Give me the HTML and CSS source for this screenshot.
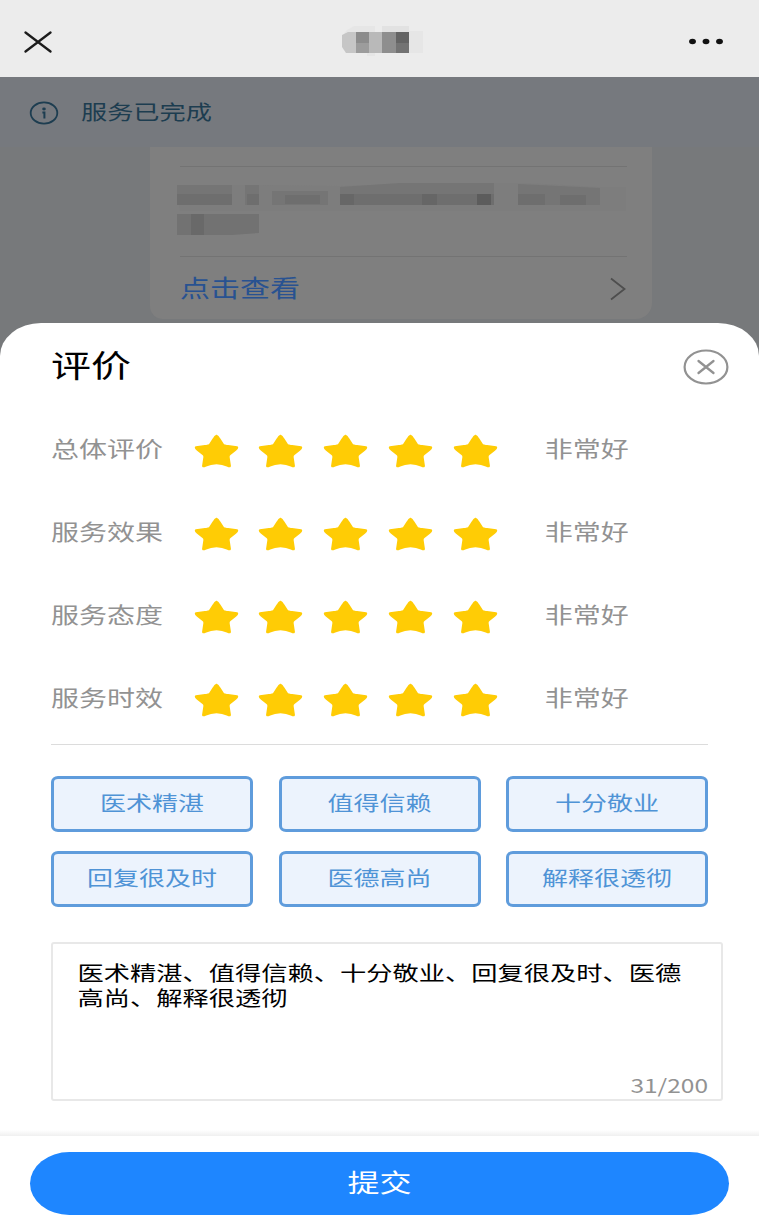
FILE: index.html
```
<!DOCTYPE html>
<html lang="zh-CN">
<head>
  <meta charset="UTF-8" />
  <title>评价</title>
  <link rel="stylesheet" href="styles.css">
</head>
<body>
  <!-- shared star shape -->
  <svg class="defs">
    <symbol id="star" viewBox="0 0 134 98" preserveAspectRatio="none">
      <path d="M67 5Q71 6 76 15L87 31Q90 33 96 34L128 38Q130 41 124 45L107 58Q103 61 103 66L107 92Q106 94 101 92Q67 76 33 92Q28 94 27 92L31 66Q31 61 27 58L10 45Q4 41 6 38L38 34Q44 33 47 31L58 15Q63 6 67 5Z" fill="#ffcc05" stroke="#ffcc05" stroke-width="6" stroke-linejoin="round"/>
    </symbol>
  </svg>

  <header class="topbar">
    <svg class="back" viewBox="0 0 28 22"><path d="M1.5 1.5L26.5 20.5M26.5 1.5L1.5 20.5" fill="none" stroke="#1c1c1c" stroke-width="2.3" stroke-linecap="round"/></svg>
    <svg class="hiddenTitle" viewBox="0 0 86 36">
      <path d="M7 10L14 6H35V37H27V33H10L4 27V13Z" fill="#e3e3e3" opacity=".6"/>
      <path d="M2 15L8 12H16V33H6L2 27Z" fill="#c6c6c6"/>
      <rect x="16" y="12" width="13" height="11" fill="#8c8c8c"/>
      <rect x="16" y="23" width="13" height="10" fill="#9c9c9c"/>
      <rect x="29" y="12" width="13" height="21" fill="#b9b9b9"/>
      <rect x="42" y="12" width="14" height="21" fill="#8e8e8e"/>
      <rect x="56" y="12" width="13" height="11" fill="#646464"/>
      <rect x="56" y="23" width="13" height="10" fill="#737373"/>
      <rect x="42" y="6" width="27" height="6" fill="#e2e2e2"/>
      <rect x="69" y="11" width="14" height="22" fill="#e6e6e6"/>
    </svg>
    <svg class="more" viewBox="0 0 36 8"><g fill="#111"><ellipse cx="4.5" cy="3.5" rx="3.4" ry="2.7"/><ellipse cx="18" cy="3.5" rx="3.4" ry="2.7"/><ellipse cx="31.5" cy="3.5" rx="3.4" ry="2.7"/></g></svg>
  </header>

  <div class="notice">
    <svg class="info" viewBox="0 0 30 24"><ellipse cx="15" cy="12" rx="13.3" ry="10.6" fill="none" stroke="#1d3d50" stroke-width="1.8"/><ellipse cx="15" cy="8" rx="1.8" ry="1.4" fill="#1d3d50"/><path d="M13.4 11.4H15.4V17.6" fill="none" stroke="#1d3d50" stroke-width="2"/></svg>
    <span class="wide">服务已完成</span>
  </div>

  <div class="page">
    <div class="card">
      <div class="message">
        <svg viewBox="0 0 446 90">
          <path d="M-3 19L80 18L160 19L260 16L345 16L420 20L446 20V44H0Z" fill="#7d7d7d"/>
          <g fill="#757575">
            <rect x="-3" y="18" width="55" height="12"/>
            <rect x="65" y="18" width="14" height="20"/>
            <rect x="92" y="24" width="56" height="14"/>
            <path d="M160 20L220 16H314V38H160Z"/>
            <path d="M338 17L420 21V38H338Z"/>
          </g>
          <g fill="#6e6e6e">
            <rect x="-3" y="27" width="55" height="11"/>
            <rect x="67" y="27" width="12" height="11"/>
            <rect x="105" y="28" width="35" height="9"/>
            <rect x="160" y="27" width="154" height="11"/>
            <rect x="338" y="27" width="27" height="11"/>
            <rect x="380" y="28" width="26" height="10"/>
          </g>
          <rect x="160" y="27" width="14" height="11" fill="#676767"/>
          <rect x="242" y="27" width="15" height="11" fill="#666"/>
          <rect x="297" y="27" width="14" height="11" fill="#5c5c5c"/>
          <rect x="-3" y="47" width="82" height="21" fill="#727272"/>
          <rect x="11" y="47" width="13" height="21" fill="#696969"/>
          <path d="M52 68L79 66V69H52Z" fill="#7f7f7f"/>
        </svg>
      </div>
      <div class="link">
        <span class="wide">点击查看</span>
        <svg viewBox="0 0 16 24"><path d="M1 1.5L14.5 12L1 22.5" fill="none" stroke="#4e4e4e" stroke-width="1.8"/></svg>
      </div>
    </div>
  </div>

  <div class="sheet">
    <div class="sheetHead">
      <h1 class="wide">评价</h1>
      <svg class="close" viewBox="0 0 46 36"><ellipse cx="23" cy="18" rx="21.4" ry="16.5" fill="none" stroke="#929292" stroke-width="2.2"/><path d="M15.5 12L30.5 24M30.5 12L15.5 24" fill="none" stroke="#929292" stroke-width="2.3" stroke-linecap="round"/></svg>
    </div>

    <div class="ratings">
      <div class="row">
        <span class="wide">总体评价</span>
        <div class="stars"><svg><use href="#star"/></svg><svg><use href="#star"/></svg><svg><use href="#star"/></svg><svg><use href="#star"/></svg><svg><use href="#star"/></svg></div>
        <span class="wide">非常好</span>
      </div>
      <div class="row">
        <span class="wide">服务效果</span>
        <div class="stars"><svg><use href="#star"/></svg><svg><use href="#star"/></svg><svg><use href="#star"/></svg><svg><use href="#star"/></svg><svg><use href="#star"/></svg></div>
        <span class="wide">非常好</span>
      </div>
      <div class="row">
        <span class="wide">服务态度</span>
        <div class="stars"><svg><use href="#star"/></svg><svg><use href="#star"/></svg><svg><use href="#star"/></svg><svg><use href="#star"/></svg><svg><use href="#star"/></svg></div>
        <span class="wide">非常好</span>
      </div>
      <div class="row">
        <span class="wide">服务时效</span>
        <div class="stars"><svg><use href="#star"/></svg><svg><use href="#star"/></svg><svg><use href="#star"/></svg><svg><use href="#star"/></svg><svg><use href="#star"/></svg></div>
        <span class="wide">非常好</span>
      </div>
    </div>

    <div class="tags">
      <div class="tag"><span class="wide">医术精湛</span></div>
      <div class="tag"><span class="wide">值得信赖</span></div>
      <div class="tag"><span class="wide">十分敬业</span></div>
      <div class="tag"><span class="wide">回复很及时</span></div>
      <div class="tag"><span class="wide">医德高尚</span></div>
      <div class="tag"><span class="wide">解释很透彻</span></div>
    </div>

    <div class="comment">
      <p>医术精湛、值得信赖、十分敬业、回复很及时、医德高尚、解释很透彻</p>
      <span class="wide count">31/200</span>
    </div>

    <div class="footer">
      <button class="submit"><span class="wide">提交</span></button>
    </div>
  </div>
</body>
</html>
```
FILE: styles.css
```
* {
  box-sizing: border-box;
}

body {
  margin: 0;
  height: 1230px;
  display: flex;
  flex-direction: column;
  overflow: hidden;
  background-color: #77797b;
  font-family: "Noto Sans CJK SC", sans-serif;
}

svg {
  display: block;
  flex: none;
}

.defs {
  width: 0;
  height: 0;
  position: absolute;
}

/* flattened lettering */
.wide {
  display: block;
  line-height: 1;
  white-space: nowrap;
  transform: scaleY(0.78);
}

.topbar {
  height: 77px;
  flex: none;
  display: flex;
  align-items: center;
  justify-content: space-between;
  padding: 6px 35px 0 24px;
  background-color: #ececec;
}

.back {
  width: 28px;
  height: 22px;
}

.hiddenTitle {
  width: 86px;
  height: 36px;
  margin: 0 0 7px 26px;
}

.more {
  width: 36px;
  height: 8px;
}

.notice {
  height: 70px;
  flex: none;
  display: flex;
  align-items: center;
  gap: 22px;
  padding: 2px 0 0 29px;
  background-color: #76797e;
  color: #1d3d50;
  font-size: 26.2px;
}

.notice .wide {
  margin-bottom: 4px;
}

.info {
  width: 30px;
  height: 24px;
}

.page {
  height: 176px;
  flex: none;
}

.card {
  width: 502px;
  height: 172px;
  margin-left: 150px;
  padding: 19px 25px 0 30px;
  background-color: #7f7f7f;
  border-radius: 0 0 16px 13px;
}

.message {
  height: 91px;
  border-top: 1px solid #737373;
  border-bottom: 1px solid #737373;
}

.message svg {
  width: 446px;
  height: 90px;
  overflow: visible;
}

.link {
  height: 62px;
  display: flex;
  align-items: center;
  justify-content: space-between;
  color: #285291;
  font-size: 30px;
}

.link .wide {
  margin-bottom: 2px;
}

.link svg {
  width: 16px;
  height: 24px;
  margin: 2px 1px 0 0;
}

.sheet {
  flex: 1;
  display: flex;
  flex-direction: column;
  background-color: #fff;
  border-radius: 41px 41px 0 0 / 33px 33px 0 0;
}

.sheetHead {
  height: 86px;
  display: flex;
  align-items: center;
  justify-content: space-between;
  padding: 2px 30px 0 51px;
}

h1 {
  margin: 0 0 6px;
  font-size: 40px;
  font-weight: 400;
  color: #000;
}

.close {
  width: 46px;
  height: 36px;
}

.ratings {
  margin: 0 51px;
  height: 336px;
  border-bottom: 1px solid #dcdcdc;
}

.row {
  height: 83px;
  display: flex;
  align-items: center;
  color: #929292;
  font-size: 28px;
}

.row .wide {
  margin-bottom: 5px;
}

.stars {
  display: flex;
  gap: 19.8px;
  margin: 0 47px 0 30.5px;
}

.stars svg {
  width: 45px;
  height: 34px;
}

.tags {
  display: grid;
  grid-template-columns: repeat(3, 202px);
  grid-auto-rows: 56px;
  gap: 18.5px 25.5px;
  margin: 31px 51px 0;
}

.tag {
  display: flex;
  align-items: center;
  justify-content: center;
  padding-bottom: 4px;
  border: 3px solid #5f9cdc;
  border-radius: 7px / 6px;
  background-color: #ecf3fd;
  color: #4f93d6;
  font-size: 26px;
}

.comment {
  height: 159px;
  margin: 35.5px 36px 0 50.5px;
  padding: 16px 13px 0 25px;
  border: 2px solid #e8e8e8;
  border-radius: 3px;
}

.comment p {
  height: 122px;
  margin: 0 0 -9px;
  width: 612px;
  font-size: 26.25px;
  line-height: 32px;
  color: #000;
  transform: scaleY(0.78);
  transform-origin: top;
}

.count {
  text-align: right;
  font-size: 24.5px;
  color: #929292;
}

.footer {
  flex: 1;
  margin-top: 29px;
  padding: 22px 30px 0;
  background: linear-gradient(#fff, #f0f0f0 6px, #fff 6px);
}

.submit {
  width: 100%;
  height: 63px;
  display: flex;
  align-items: center;
  justify-content: center;
  padding: 0 0 5px;
  border: none;
  border-radius: 40px / 32px;
  background-color: #1e86ff;
  color: #fff;
  font-family: inherit;
  font-size: 32px;
}
```
